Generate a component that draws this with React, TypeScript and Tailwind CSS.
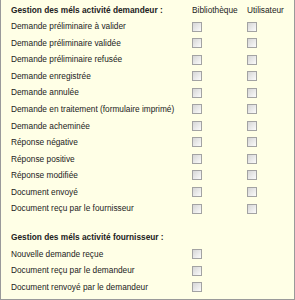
import React from "react";

const section1 = [
  "Demande préliminaire à valider",
  "Demande préliminaire validée",
  "Demande préliminaire refusée",
  "Demande enregistrée",
  "Demande annulée",
  "Demande en traitement (formulaire imprimé)",
  "Demande acheminée",
  "Réponse négative",
  "Réponse positive",
  "Réponse modifiée",
  "Document envoyé",
  "Document reçu par le fournisseur",
];

const section2 = [
  "Nouvelle demande reçue",
  "Document reçu par le demandeur",
  "Document renvoyé par le demandeur",
];

function Box() {
  return (
    <span className="block w-[10px] h-[10px] border border-[#a3a3a3] bg-gradient-to-br from-[#d6d6d6] to-[#fbfbfb]" />
  );
}

function Row({ label, two }: { label: string; two: boolean }) {
  return (
    <div className="grid grid-cols-[181px_55px_1fr] h-[16.55px] items-center">
      <span className="whitespace-nowrap">{label}</span>
      <Box />
      {two ? <Box /> : <span />}
    </div>
  );
}

export default function App() {
  return (
    <div
      className="w-[295px] h-[300px] bg-[#ffffe6] border-l border-r border-b border-[#9a9a9a] pl-[10px] pt-[1.7px] text-[8.3px] text-[#222] flex flex-col"
      style={{ fontFamily: '"Liberation Sans", Arial, sans-serif' }}
    >
      <div className="grid grid-cols-[181px_55px_1fr] h-[16.55px] items-center">
        <span className="font-bold whitespace-nowrap">Gestion des méls activité demandeur :</span>
        <span>Bibliothèque</span>
        <span>Utilisateur</span>
      </div>
      {section1.map((l) => (
        <Row key={l} label={l} two />
      ))}
      <div className="h-[12.4px]" />
      <div className="grid grid-cols-[181px_55px_1fr] h-[16.55px] items-center">
        <span className="font-bold whitespace-nowrap">Gestion des méls activité fournisseur :</span>
      </div>
      {section2.map((l) => (
        <Row key={l} label={l} two={false} />
      ))}
    </div>
  );
}
